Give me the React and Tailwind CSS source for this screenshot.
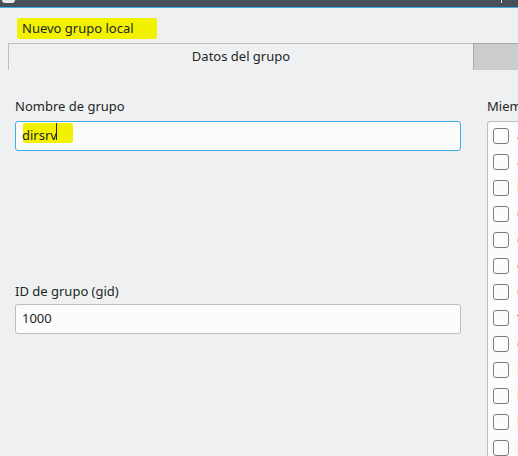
import React from 'react'

const members = ['adm', 'audio', 'bin', 'cdrom', 'daemon', 'dialout', 'disk', 'floppy', 'games', 'input', 'kmem', 'lp', 'mail']

function Checkbox() {
  return <span className="w-4 h-4 shrink-0 rounded-[3px] border border-[#7a7c7e] bg-[#fcfcfc]" />
}

export default function App() {
  return (
    <div className="w-[518px] h-[456px] overflow-hidden bg-[#eff0f1] text-[13px] text-[#232627] font-['Noto_Sans',sans-serif]">
      {/* window title strip */}
      <div className="relative h-[7px] bg-[#475057]">
        <span className="absolute left-[2px] top-0 w-[13px] h-[3px] rounded-b-[3px] bg-[#e8e8e8]" />
        <span className="absolute left-[501px] top-0 w-px h-[3px] bg-white" />
      </div>
      <div className="h-px bg-[#3daee9]" />

      {/* header */}
      <div className="pt-[10px] pl-[17px]">
        <span className="inline-flex items-center h-[21px] w-[140px] pl-[5px] bg-[#f2f200] rounded-[3px] leading-[21px]">
          Nuevo grupo local
        </span>
      </div>

      {/* tabs */}
      <div className="flex mt-[4px] pl-[8px] h-[27px]">
        <div className="w-[465px] flex items-center justify-center border-t border-l border-[#bcbebf]">
          Datos del grupo
        </div>
        <div className="flex-1 bg-[#cbcccd] border-t border-l border-[#a8aaab]" />
      </div>

      {/* panel */}
      <div className="flex pl-[15px] pt-[27px] gap-[26px]">
        <div className="w-[446px] shrink-0 flex flex-col">
          <label className="leading-[18px]">Nombre de grupo</label>
          <div className="mt-[6px] h-[30px] flex items-center pl-[6px] bg-[#fcfcfc] border border-[#3daee9] rounded-[3px]">
            <span className="relative">
              <span className="absolute left-[1px] -top-[3px] w-[50px] h-[20px] bg-[#f2f200] rounded-[2px]" />
              <span className="relative">dirsrv</span>
              <span className="absolute left-[34px] -top-[3px] w-px h-[17px] bg-[#232627]" />
            </span>
          </div>
          <label className="mt-[131px] leading-[18px]">ID de grupo (gid)</label>
          <div className="mt-[4px] h-[30px] flex items-center pl-[6px] bg-[#fcfcfc] border border-[#bcbebf] rounded-[3px]">
            1000
          </div>
        </div>

        <div className="flex-1 min-w-0 flex flex-col">
          <label className="leading-[18px] whitespace-nowrap">Miembros</label>
          <div className="mt-[6px] pt-px bg-[#fcfcfc] border-t border-l border-[#bcbebf] rounded-tl-[3px]">
            {members.map((m) => (
              <div key={m} className="h-[26px] flex items-center gap-[8px] pl-[5px] whitespace-nowrap text-[#232627]">
                <Checkbox />
                <span>{m}</span>
              </div>
            ))}
          </div>
        </div>
      </div>
    </div>
  )
}
